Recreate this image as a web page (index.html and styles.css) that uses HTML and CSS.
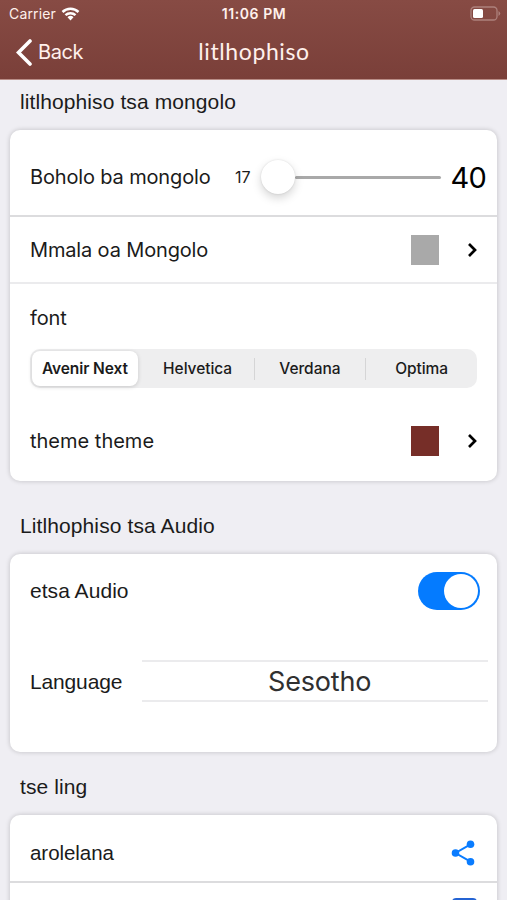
FILE: index.html
```html
<!DOCTYPE html>
<html lang="st">
<head>
<meta charset="utf-8">
<title>litlhophiso</title>
<link rel="stylesheet" href="styles.css">
</head>
<body>
<header class="header">
  <div class="status">
    <div class="carrier"><span class="carrier-name">Carrier</span>
      <svg width="19" height="14" viewBox="0 0 18 14" fill="none" stroke="#fff" stroke-width="2.5"><path d="M1 5a11.5 11.5 0 0 1 16 0M4 8.2a7.2 7.2 0 0 1 10 0"/><path d="M9 13.4 6 10.3a4.3 4.3 0 0 1 6 0z" fill="#fff" stroke="none"/></svg>
    </div>
    <span class="time">11:06 PM</span>
    <svg class="battery" width="31" height="15" viewBox="0 0 31 15"><rect x="1" y="1" width="26" height="13" rx="3.5" fill="none" stroke="#ad817c" stroke-width="1.3"/><rect x="3" y="3" width="10" height="9" rx="1.5" fill="#fff"/><path d="M28.5 5q3.5 2.500 0 5z" fill="#ad817c"/></svg>
  </div>
  <nav class="nav">
    <a class="back"><svg width="16" height="27" viewBox="0 0 16 27" fill="none" stroke="#fff" stroke-width="3.6" stroke-linecap="round"><path d="M14 2 2.500 13.500 14 25"/></svg><span class="back-label">Back</span></a>
    <h1 class="title">litlhophiso</h1>
  </nav>
</header>
<main>
  <h2 class="section first">litlhophiso tsa mongolo</h2>
  <section class="card">
    <div class="row size-row line">
      <span class="label">Boholo ba mongolo</span>
      <span class="min">17</span>
      <div class="slider"><span class="knob"></span><span class="track"></span></div>
      <span class="max">40</span>
    </div>
    <div class="row color-row line light">
      <span class="label">Mmala oa Mongolo</span>
      <span class="swatch gray"></span>
      <svg class="chevron" width="10" height="16" viewBox="0 0 10 16"><path d="M2 2 8 8l-6 6"/></svg>
    </div>
    <div class="font-row">
      <span class="label">font</span>
      <div class="segments">
        <span class="segment active">Avenir Next</span>
        <span class="segment">Helvetica</span>
        <span class="segment sep">Verdana</span>
        <span class="segment sep">Optima</span>
      </div>
    </div>
    <div class="row theme-row">
      <span class="label theme">theme theme</span>
      <span class="swatch red"></span>
      <svg class="chevron" width="10" height="16" viewBox="0 0 10 16"><path d="M2 2 8 8l-6 6"/></svg>
    </div>
  </section>
  <h2 class="section">Litlhophiso tsa Audio</h2>
  <section class="card">
    <div class="row audio-row">
      <span class="label helv">etsa Audio</span>
      <span class="toggle"><span class="toggle-knob"></span></span>
    </div>
    <div class="row language-row">
      <span class="label helv language">Language</span>
      <div class="picker">Sesotho</div>
    </div>
  </section>
  <h2 class="section last">tse ling</h2>
  <section class="card">
    <div class="row share-row line">
      <span class="label helv share-label">arolelana</span>
      <svg class="share" width="24" height="26" viewBox="0 0 24 26" fill="#0a7cff"><path d="M19.500 4.300 4.500 13l15 8.700" fill="none" stroke="#0a7cff" stroke-width="2"/><circle cx="19.500" cy="4.300" r="3.800"/><circle cx="4.500" cy="13" r="3.800"/><circle cx="19.500" cy="21.700" r="3.800"/></svg>
    </div>
    <div class="row next-row"><span class="tile"></span></div>
  </section>
</main>
</body>
</html>
```
FILE: styles.css
```css
* { box-sizing: border-box; }
body { margin: 0; height: 900px; overflow: hidden; background: #efeef3; color: #1b1b1b; font-family: Inter, sans-serif; }
.header { height: 80px; background: linear-gradient(#874b44, #7a3f39); border-bottom: 1px solid #b98d87; color: #fff0ec; }
.status { height: 27px; display: grid; grid-template-columns: 1fr auto 1fr; align-items: center; padding: 0 6px 0 9px; }
.carrier { display: flex; align-items: center; gap: 5px; font-size: 14px; }
.carrier-name { letter-spacing: .15px; }
.time { font-size: 14px; font-weight: 600; letter-spacing: .55px; margin-right: 2px; }
.battery { justify-self: end; margin-top: -1px; }
.nav { height: 50px; display: grid; grid-template-columns: 1fr auto 1fr; align-items: center; padding: 0 16px; }
.back { display: flex; align-items: center; gap: 6px; font-size: 20px; letter-spacing: -.4px; }
.title { margin: 0; padding: 0 0 2px 1px; font: 400 23px Lato, sans-serif; letter-spacing: .6px; }
.section { height: 73px; margin: 0; padding: 16px 20px 0; display: flex; align-items: center; font: 400 21px "Liberation Sans", sans-serif; letter-spacing: .1px; }
.first { height: 50px; padding-top: 0; padding-bottom: 6px; }
.last { height: 63px; padding-top: 7px; }
.card { margin: 0 10px; background: #fff; border-radius: 10px; box-shadow: 0 0 5px rgba(0,0,0,.2); overflow: hidden; }
.row { display: flex; align-items: center; padding: 0 20px; }
.line { border-bottom: 2px solid #dcdcde; }
.light { border-color: #ebebed; }
.label { font-size: 20px; letter-spacing: -.15px; white-space: nowrap; }
.theme { letter-spacing: 0; }
.helv { font-family: "Liberation Sans", sans-serif; font-size: 21px; letter-spacing: .05px; }
.language { letter-spacing: -.15px; }
.share-label { font-size: 20.500px; letter-spacing: -.05px; }
.size-row { height: 87px; padding: 9px 11px 0 20px; }
.min { margin-left: auto; font-size: 16px; }
.slider { width: 180px; margin: 0 10px 0 10px; display: flex; align-items: center; }
.knob { width: 34px; height: 34px; border-radius: 50%; background: #fff; box-shadow: 0 4px 10px rgba(0,0,0,.17), 0 0 2px rgba(0,0,0,.13); z-index: 1; }
.track { flex: 1; height: 3px; background: #a9a9a9; border-radius: 2px; }
.max { font-size: 29px; letter-spacing: -.8px; color: #000; }
.color-row { height: 67px; }
.swatch { width: 28px; height: 30px; margin-left: auto; margin-right: 28px; }
.gray { background: #a9a9a9; }
.red { background: #762e28; }
.chevron { fill: none; stroke: #000; stroke-width: 2.700px; }
.font-row { height: 117px; padding: 22px 20px 0; display: flex; flex-direction: column; gap: 19px; line-height: 24px; }
.segments { height: 39px; display: grid; grid-template-columns: repeat(4, 1fr); align-items: center; background: #eeeeef; border-radius: 10px; }
.segment { text-align: center; font-size: 15.500px; font-weight: 500; letter-spacing: -.05px; line-height: 22px; }
.active { margin: 0 4px 0 2px; height: 35px; line-height: 35px; font-weight: 600; letter-spacing: -.1px; background: #fff; border-radius: 8px; box-shadow: 0 1px 4px rgba(0,0,0,.16); }
.sep { border-left: 1px solid #d5d5d6; }
.theme-row { height: 80px; }
.audio-row { height: 76px; padding-right: 17px; padding-bottom: 2px; }
.toggle { width: 62px; height: 38px; margin-left: auto; border-radius: 19px; background: #047bff; display: flex; justify-content: flex-end; padding: 2px; }
.toggle-knob { width: 34px; height: 34px; border-radius: 50%; background: #fff; }
.language-row { height: 122px; padding-right: 9px; padding-bottom: 20px; gap: 20px; }
.language { padding-top: 2px; }
.picker { flex: 1; height: 42px; border-top: 2px solid #ebebed; border-bottom: 2px solid #ebebed; text-align: center; font-size: 27px; letter-spacing: -.2px; line-height: 40px; padding-left: 9px; color: #303030; }
.share-row { height: 68px; padding-top: 10px; }
.share { margin-left: auto; margin-right: 2px; }
.next-row { height: 60px; align-items: flex-start; padding-top: 15px; }
.tile { width: 25px; height: 25px; margin-left: auto; background: #2463d3; border-radius: 4px; }
```
